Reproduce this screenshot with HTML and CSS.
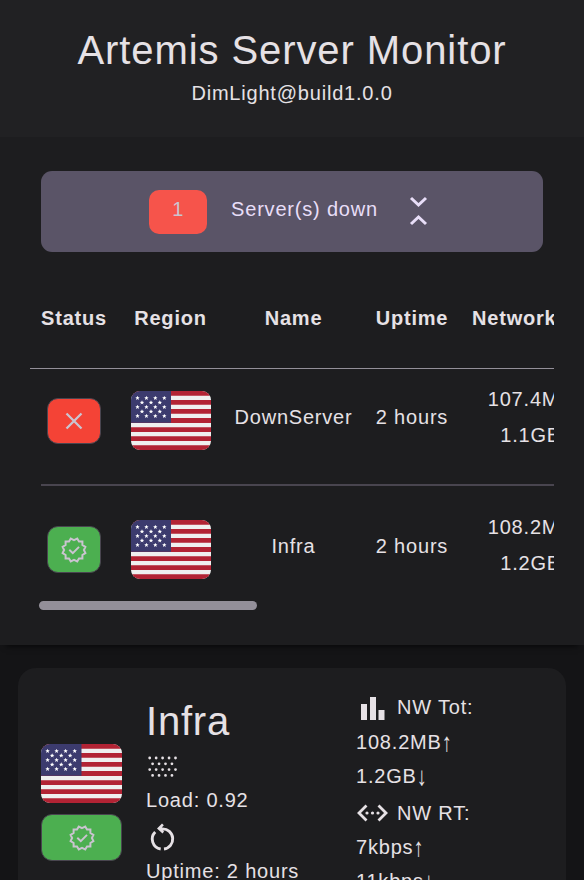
FILE: index.html
```html
<!DOCTYPE html>
<html lang="en">
<head>
<meta charset="utf-8">
<title>Artemis Server Monitor</title>
<link rel="stylesheet" href="styles.css">
</head>
<body>
<svg class="defs" aria-hidden="true">
  <defs>
    <path id="star" fill="#fff" d="M0-2.3 .65-.75 2.2-.7 1 .3 1.4 1.9 0 1-1.4 1.9-1 .3-2.2-.7-.65-.75Z"/>
    <g id="star-row"><use href="#star" x="6.5"/><use href="#star" x="15.4"/><use href="#star" x="24.3"/><use href="#star" x="33.3"/></g>
    <g id="star-row-short"><use href="#star" x="11"/><use href="#star" x="20"/><use href="#star" x="28.8"/></g>
    <symbol id="flag" viewBox="0 0 80 59" preserveAspectRatio="none">
      <rect width="80" height="59" fill="#efefef"/>
      <path stroke="#b22334" stroke-width="4.9" d="M0 2.27H80M0 11.35H80M0 20.42H80M0 29.5H80M0 38.58H80M0 47.65H80M0 56.73H80"/>
      <rect width="40" height="31.8" fill="#3c3b6e"/>
      <use href="#star-row" y="7"/><use href="#star-row-short" y="11.6"/><use href="#star-row" y="16"/><use href="#star-row-short" y="20.6"/><use href="#star-row" y="25"/>
    </symbol>
    <symbol id="verified" viewBox="0 0 26 26">
      <path fill="none" stroke="currentColor" stroke-width="2" stroke-linejoin="miter" d="M13 3.1 16.2 1.6 18 4.6 21.4 4.6 21.4 8 24.4 9.8 22.9 13 24.4 16.2 21.4 18 21.4 21.4 18 21.4 16.2 24.4 13 22.9 9.8 24.4 8 21.4 4.6 21.4 4.6 18 1.6 16.2 3.1 13 1.6 9.8 4.6 8 4.6 4.6 8 4.6 9.8 1.6Z"/>
      <path fill="none" stroke="currentColor" stroke-width="2" d="M8.3 12.8 11.8 16.2 18 9.9"/>
    </symbol>
  </defs>
</svg>
<header class="top">
  <h1>Artemis Server Monitor</h1>
  <p>DimLight@build1.0.0</p>
</header>
<section class="panel">
  <button class="summary">
    <span class="count">1</span>
    <span class="summary-text">Server(s) down</span>
    <svg class="collapse" viewBox="0 0 20 32"><path d="M3 3l7.500 7 7.500-7M3 29l7.500-7 7.500 7"/></svg>
  </button>
  <div class="scroller">
    <div class="row head"><b>Status</b><b>Region</b><b>Name</b><b>Uptime</b><b class="net-title">Network Total</b></div>
    <div class="row">
      <span class="badge down"><svg viewBox="0 0 18 18"><path d="M1.5 1.5l15 15M16.5 1.5l-15 15"/></svg></span>
      <svg class="flag"><use href="#flag"/></svg>
      <span class="label">DownServer</span><span class="label">2 hours</span>
      <span class="net">107.4MB<i>↑</i><br>1.1GB<i>↓</i></span>
    </div>
    <hr>
    <div class="row second">
      <span class="badge up"><svg><use href="#verified"/></svg></span>
      <svg class="flag"><use href="#flag"/></svg>
      <span class="label">Infra</span><span class="label">2 hours</span>
      <span class="net">108.2MB<i>↑</i><br>1.2GB<i>↓</i></span>
    </div>
  </div>
  <div class="thumb"></div>
</section>
<main>
  <article class="card">
    <div class="identity">
      <svg class="flag"><use href="#flag"/></svg>
      <span class="badge up wide"><svg><use href="#verified"/></svg></span>
    </div>
    <div class="stats">
      <h2>Infra</h2>
      <svg class="grain" viewBox="0 0 32 24"><path d="M2.700 4H29M2.700 15.600H29"/><path d="M5.600 9.800H25.500M5.600 21.400H25.500"/></svg>
      <p>Load: 0.92</p>
      <svg class="restart" viewBox="0 0 26 30"><path fill="none" stroke="currentColor" stroke-width="2.900" d="M6.200 9.900A10.100 10.100 0 0 0 11.700 27M15 27A10.100 10.100 0 0 0 13.300 6.900H11"/><path fill="currentColor" d="M13 1.500 14.800 3.200 12.800 5.500 15 9.500 13.500 11.500 8 6.500Z"/></svg>
      <p>Uptime: 2 hours</p>
    </div>
    <div class="traffic">
      <p class="with-icon"><svg viewBox="0 0 32 26"><path fill="currentColor" d="M5 9h6v16H5zM14 2h6v23h-6zM22.500 15h6v10h-6z"/></svg>NW Tot:</p>
      <p>108.2MB<i>↑</i></p>
      <p>1.2GB<i>↓</i></p>
      <p class="with-icon rt"><svg viewBox="0 0 32 26"><path fill="none" stroke="currentColor" stroke-width="2.8" d="M10.500 5.500 3 13 10.500 20.500M22.500 5.500 30 13 22.500 20.500"/><g fill="currentColor"><circle cx="11" cy="13" r="1.600"/><circle cx="16.500" cy="13" r="1.600"/><circle cx="22" cy="13" r="1.600"/></g></svg>NW RT:</p>
      <p>7kbps<i>↑</i></p>
      <p>11kbps<i>↓</i></p>
    </div>
  </article>
</main>
</body>
</html>
```
FILE: styles.css
```css
* { box-sizing: border-box; }
body {
  display: flex;
  flex-direction: column;
  margin: 0;
  height: 880px;
  overflow: hidden;
  background: #141416;
  color: #e6e1e5;
  font: 20px/34px "Liberation Sans", Arial, sans-serif;
  letter-spacing: 0.8px;
}
h1, h2, p { margin: 0; font-weight: 400; }
svg { display: block; }
i { display: inline-block; font-style: normal; line-height: 20px; transform: scaleY(1.3); }
.defs { position: absolute; width: 0; height: 0; }
.top { flex: none; height: 137px; padding-top: 25px; background: #212123; text-align: center; }
.top h1 { font-size: 40px; line-height: 50px; letter-spacing: 0.92px; }
.top p { padding-top: 1px; }
.panel {
  flex: none;
  height: 508px;
  padding: 34px 30px 0;
  background: #1d1d1f;
  box-shadow: 0 7px 6px -6px rgba(0, 0, 0, 0.7);
}
.summary {
  display: flex;
  align-items: center;
  justify-content: center;
  width: 502px;
  height: 81px;
  margin-left: 11px;
  padding: 0 7px 4px 0;
  border: 0;
  border-radius: 11px;
  background: #5a5467;
  color: #e8def8;
  font: inherit;
  letter-spacing: inherit;
}
.summary-text { padding-bottom: 2px; }
.count {
  width: 58px;
  height: 44px;
  margin: 5px 24px 0 0;
  border-radius: 10px;
  background: #f6544b;
  color: #cac4d0;
  line-height: 38px;
}
.collapse { width: 20px; height: 32px; margin: 3px 0 0 30px; fill: none; stroke: currentColor; stroke-width: 3; }
.scroller { width: 524px; overflow: hidden; }
.row {
  display: grid;
  grid-template-columns: 88px 105px 141px 96px 151px;
  width: 581px;
  height: 115px;
  justify-items: center;
}
.head { height: 117px; padding-top: 49px; border-bottom: 1px solid #938f99; }
.net-title { white-space: nowrap; justify-self: start; padding-left: 12px; }
.row .flag { margin-top: 22px; }
.flag { width: 80px; height: 59px; border-radius: 9px; }
.badge {
  display: flex;
  align-items: center;
  justify-content: center;
  width: 54px;
  height: 46px;
  margin-top: 29px;
  border: 1px solid #49454f;
  border-radius: 11px;
  color: #cac4d0;
}
.down { background: #f44336; }
.down svg { width: 18px; height: 18px; fill: none; stroke: currentColor; stroke-width: 2.3; }
.up { background: #4caf50; }
.up svg { width: 26px; height: 26px; }
.label { padding-top: 31px; }
.net { padding: 12px 0 0 1px; line-height: 36px; text-align: center; }
hr { height: 2px; margin: 0 0 0 11px; border: 0; background: #49454f; }
.second { height: 115px; padding-top: 12px; }
.second .badge { margin-top: 28px; height: 47px; }
.second .net { padding-top: 11px; }
.thumb { width: 218px; height: 9px; margin: 0 0 0 9px; border-radius: 5px; background: #938f99; }
main { flex: 1; min-height: 0; padding: 23px 18px 0; }
.card {
  display: grid;
  grid-template-columns: 105px 210px 1fr;
  height: 212px;
  padding: 0 23px;
  border-radius: 18px 18px 0 0;
  background: #1d1d1f;
  overflow: hidden;
}
.identity { padding-top: 76px; }
.identity .flag { width: 81px; }
.wide { width: 81px; height: 47px; margin-top: 11px; }
.stats { padding-top: 28px; }
.stats h2 { font-size: 40px; line-height: 50px; }
.grain { width: 32px; height: 24px; margin: 8px 0 5px 1px; fill: none; stroke: currentColor; stroke-width: 2.8; stroke-linecap: round; stroke-dasharray: 0 6.45; }
.restart { width: 26px; height: 30px; margin: 5px 0 2px 3px; }
.traffic { padding-top: 21px; }
.with-icon { display: flex; align-items: center; height: 36px; }
.with-icon svg { width: 32px; height: 26px; margin: 1px 9px 0 0; }
.rt { height: 37px; padding-top: 2px; }
```
